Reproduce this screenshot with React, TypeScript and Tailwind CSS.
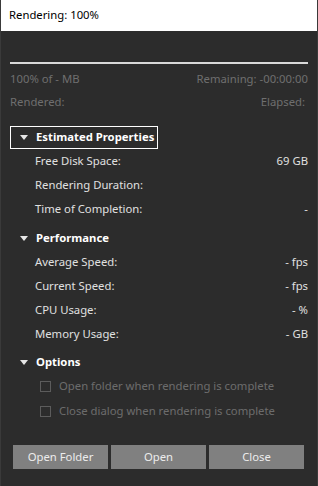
import React from 'react';

const font = { fontFamily: '"Noto Sans", "Open Sans", sans-serif' };

const Caret = () => (
  <svg width="8" height="5" viewBox="0 0 8 5" className="shrink-0">
    <path d="M0 0 H8 L4 5 Z" fill="#e6e6e6" />
  </svg>
);

const Section = ({ title, boxed }: { title: string; boxed?: boolean }) => (
  <div className={`flex items-center h-[23px] pl-[9px] pr-[3px] w-fit ${boxed ? 'border border-white' : 'border border-transparent'}`}>
    <Caret />
    <span className="ml-[8px] text-[11.3px] font-bold text-white">{title}</span>
  </div>
);

const Row = ({ label, value }: { label: string; value?: string }) => (
  <div className="flex items-center justify-between h-[24px] pl-[25px] text-[11.3px] text-[#e0e0e0]">
    <span>{label}</span>
    <span>{value}</span>
  </div>
);

const Check = ({ label }: { label: string }) => (
  <div className="flex items-center h-[25px] pl-[30px] text-[11.3px] text-[#6c6c6c]">
    <div className="w-[11px] h-[11px] border border-[#5c5c5c]" />
    <span className="ml-[8px]">{label}</span>
  </div>
);

export default function App() {
  return (
    <div style={font} className="w-[318px] h-[486px] bg-[#2c2c2c] flex flex-col border-l border-[#3a3a3a] border-r border-r-[#3a3a3a]">
      <div className="h-[31px] bg-white flex items-center pl-[8px] text-[11.3px] text-black">
        Rendering: 100%
      </div>

      <div className="px-[9px]">
        <div className="mt-[31px] h-[2px] bg-[#d9d9d9]" />
        <div className="mt-[7px] flex justify-between text-[11.3px] text-[#6f6f6f] leading-[16px]">
          <span>100% of - MB</span>
          <span>Remaining: -00:00:00</span>
        </div>
        <div className="mt-[7px] flex justify-between text-[11.3px] text-[#6f6f6f] leading-[16px]">
          <span>Rendered:</span>
          <span className="mr-[3px]">Elapsed:</span>
        </div>

        <div className="mt-[16px]">
          <Section title="Estimated Properties" boxed />
          <Row label="Free Disk Space:" value="69 GB" />
          <Row label="Rendering Duration:" />
          <Row label="Time of Completion:" value="-" />
        </div>

        <div className="mt-[6px]">
          <Section title="Performance" />
          <Row label="Average Speed:" value="- fps" />
          <Row label="Current Speed:" value="- fps" />
          <Row label="CPU Usage:" value="- %" />
          <Row label="Memory Usage:" value="- GB" />
        </div>

        <div className="mt-[5px]">
          <Section title="Options" />
          <Check label="Open folder when rendering is complete" />
          <Check label="Close dialog when rendering is complete" />
        </div>

        <div className="mt-[21px] flex gap-[3px] px-[3px] pr-[4px]">
          {['Open Folder', 'Open', 'Close'].map((b) => (
            <div key={b} className="flex-1 h-[24px] bg-[#808080] text-[#ececec] text-[11.3px] flex items-center justify-center">
              {b}
            </div>
          ))}
        </div>
      </div>
    </div>
  );
}
